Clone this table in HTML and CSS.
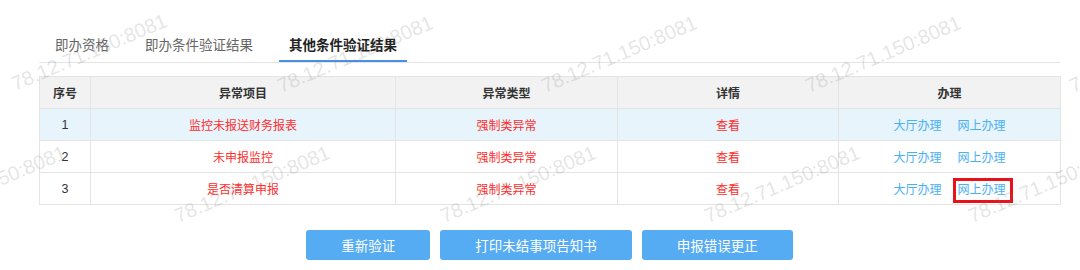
FILE: index.html
```html
<!DOCTYPE html>
<html lang="zh-CN">
<head>
<meta charset="utf-8">
<title>其他条件验证结果</title>
<link rel="stylesheet" href="styles.css">
</head>
<body>
<div class="page">
  <div class="tabs">
    <div class="tab">即办资格</div>
    <div class="tab">即办条件验证结果</div>
    <div class="tab active">其他条件验证结果</div>
  </div>
  <table class="grid">
    <colgroup>
      <col class="c1"><col class="c2"><col class="c3"><col class="c4"><col class="c5">
    </colgroup>
    <thead>
      <tr><th>序号</th><th>异常项目</th><th>异常类型</th><th>详情</th><th>办理</th></tr>
    </thead>
    <tbody>
      <tr class="hover">
        <td class="num">1</td><td class="red">监控未报送财务报表</td><td class="red">强制类异常</td><td class="red">查看</td>
        <td><a class="lnk">大厅办理</a><a class="lnk">网上办理</a></td>
      </tr>
      <tr>
        <td class="num">2</td><td class="red">未申报监控</td><td class="red">强制类异常</td><td class="red">查看</td>
        <td><a class="lnk">大厅办理</a><a class="lnk">网上办理</a></td>
      </tr>
      <tr>
        <td class="num">3</td><td class="red">是否清算申报</td><td class="red">强制类异常</td><td class="red">查看</td>
        <td><a class="lnk">大厅办理</a><a class="lnk marked">网上办理</a></td>
      </tr>
    </tbody>
  </table>
  <div class="actions">
    <button class="btn">重新验证</button>
    <button class="btn">打印未结事项告知书</button>
    <button class="btn">申报错误更正</button>
  </div>
</div>
<div class="wm-layer">
  <span class="wm w1">78.12.71.150:8081</span>
  <span class="wm w2">78.12.71.150:8081</span>
  <span class="wm w3">78.12.71.150:8081</span>
  <span class="wm w4">78.12.71.150:8081</span>
  <span class="wm w5">78.12.71.150:8081</span>
  <span class="wm w6">78.12.71.150:8081</span>
  <span class="wm w7">78.12.71.150:8081</span>
  <span class="wm w8">78.12.71.150:8081</span>
  <span class="wm w9">78.12.71.150:8081</span>
  <span class="wm w10">78.12.71.150:8081</span>
</div>
</body>
</html>
```
FILE: styles.css
```css
* { box-sizing: border-box; }
html, body { margin: 0; padding: 0; background: #fff; }
body {
  width: 1080px;
  height: 270px;
  overflow: hidden;
  position: relative;
  font-family: "Liberation Sans", "Noto Sans CJK SC", sans-serif;
  color: #333;
}
.page {
  padding: 30px 0 0 39px;
  width: 1060px;
}
.tabs {
  display: flex;
  gap: 16px;
  padding-left: 6px;
  border-bottom: 1px solid #e4e4e4;
}
.tab {
  font-size: 13.5px;
  line-height: 20px;
  padding: 6px 10px 4px;
  border-bottom: 2px solid transparent;
  color: #666;
}
.tab.active {
  color: #222;
  font-weight: bold;
  border-bottom-color: #4a8fe6;
}
.grid {
  margin-top: 13px;
  width: 1021px;
  table-layout: fixed;
  border-collapse: collapse;
  font-size: 12px;
}
.c1 { width: 51px; }
.c2 { width: 305px; }
.c3 { width: 222px; }
.c4 { width: 221px; }
.c5 { width: 222px; }
.grid th, .grid td {
  border: 1px solid #e4e4e4;
  height: 32px;
  padding: 0;
  text-align: center;
  vertical-align: middle;
}
.grid th {
  background: #f2f2f2;
  font-weight: bold;
  color: #333;
}
.grid tr.hover td { background: #e7f4fb; }
.num { color: #333; font-size: 12.5px; }
.red { color: #ff2d2d; }
.lnk {
  color: #48b0f3;
  margin: 0 8px;
  position: relative;
  cursor: pointer;
}
.lnk.marked::after {
  content: "";
  position: absolute;
  left: -5px;
  right: -7px;
  top: -5px;
  bottom: -6px;
  border: 3px solid #e8111c;
}
.actions {
  width: 1021px;
  margin-top: 25px;
  display: flex;
  justify-content: center;
  gap: 10px;
}
.btn {
  height: 30px;
  padding: 0 35px;
  border: 0;
  border-radius: 3px;
  background: #55acf3;
  color: #fff;
  font-family: "Liberation Sans", "Noto Sans CJK SC", sans-serif;
  font-size: 13.5px;
}
.wm-layer {
  position: absolute;
  inset: 0;
  pointer-events: none;
}
.wm {
  position: absolute;
  font-family: "Liberation Sans", sans-serif;
  font-size: 20px;
  line-height: 20px;
  white-space: nowrap;
  color: rgba(120, 120, 120, 0.2);
  transform-origin: 0 17px;
  transform: rotate(-23deg);
}
.w1 { left: 15px; top: 74px; }
.w2 { left: 281px; top: 76px; }
.w3 { left: 545px; top: 76px; }
.w4 { left: 809px; top: 76px; }
.w5 { left: 1073px; top: 76px; }
.w6 { left: -86px; top: 206px; }
.w7 { left: 178px; top: 206px; }
.w8 { left: 444px; top: 206px; }
.w9 { left: 708px; top: 206px; }
.w10 { left: 972px; top: 206px; }
```
